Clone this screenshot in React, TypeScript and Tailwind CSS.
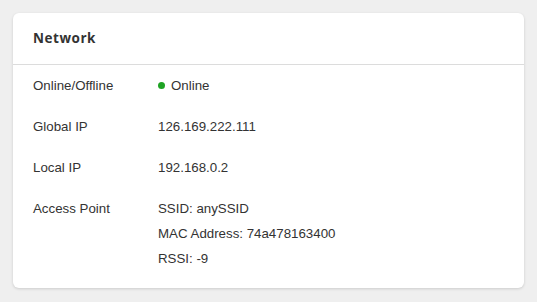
import React from "react";

const rows: { label: string; values: React.ReactNode[] }[] = [
  {
    label: "Online/Offline",
    values: [
      <span className="flex items-center gap-[6px]" key="on">
        <span className="inline-block h-[7px] w-[7px] rounded-full bg-[#1fa324]" />
        Online
      </span>,
    ],
  },
  { label: "Global IP", values: ["126.169.222.111"] },
  { label: "Local IP", values: ["192.168.0.2"] },
  {
    label: "Access Point",
    values: ["SSID: anySSID", "MAC Address: 74a478163400", "RSSI: -9"],
  },
];

const App = () => {
  return (
    <div className="min-h-screen w-full bg-[#efefef] p-[13px]">
      <div className="w-[511px] rounded-[6px] bg-white shadow-[0_1px_3px_rgba(0,0,0,0.15)]">
        {/* header */}
        <div className="flex h-[52px] items-center border-b border-[#dcdcdc] px-[20px]">
          <h2 className="text-[13.5px] font-bold tracking-[0.04em] text-[#333] [font-family:'Open_Sans',sans-serif]">
            Network
          </h2>
        </div>
        {/* body */}
        <div className="flex flex-col gap-[16px] px-[20px] pt-[8px] pb-[17px] text-[13.3px] leading-[25px] text-[#333] [font-family:'Liberation_Sans',Arial,sans-serif]">
          {rows.map((row, index) => (
            <div className="flex" key={index}>
              <div className="w-[125px] shrink-0">{row.label}</div>
              <div className="flex flex-col">
                {row.values.map((v, i) => (
                  <div key={i}>{v}</div>
                ))}
              </div>
            </div>
          ))}
        </div>
      </div>
    </div>
  );
};

export default App;
